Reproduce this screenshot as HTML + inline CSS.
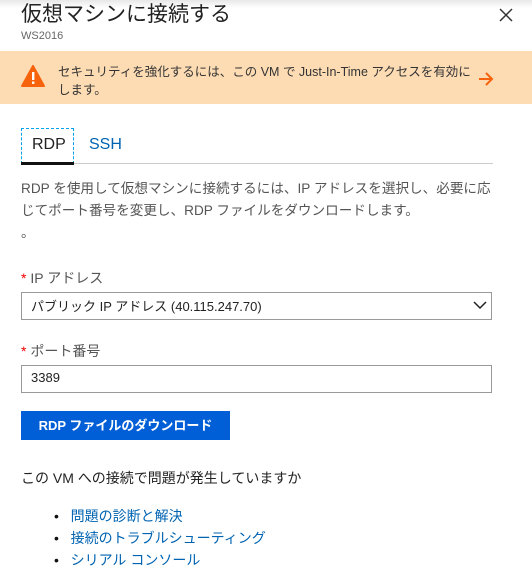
<html><head><style>
body{margin:0;width:532px;height:574px;overflow:hidden;background:#fff;font-family:"Liberation Sans","Noto Sans CJK JP",sans-serif;color:#333;position:relative}
.a{position:absolute;white-space:nowrap}
</style></head><body>
<div style="position:absolute;left:0;top:0;width:532px;height:8px;background:linear-gradient(#e8e8e8,#fff)"></div>
<div class="a" style="left:21px;top:-2px;font-size:21px;color:#222">仮想マシンに接続する</div>
<svg class="a" style="left:499px;top:8px" width="14" height="14"><path d="M1 1L13 13M13 1L1 13" stroke="#333" stroke-width="1.5"/></svg>
<div class="a" style="left:21px;top:30px;font-size:11px;color:#666">WS2016</div>
<div class="a" style="left:0;top:51px;width:532px;height:53px;background:#fddcb4"></div>
<svg class="a" style="left:21px;top:65px" width="24" height="22"><path d="M12 1L23 21H1Z" fill="#f7630c" stroke="#f7630c" stroke-linejoin="round" stroke-width="2"/><rect x="11" y="7" width="2.4" height="8" fill="#fff"/><rect x="11" y="16.5" width="2.4" height="2.4" fill="#fff"/></svg>
<div class="a" style="left:58px;top:63px;font-size:12.5px;line-height:18px;color:#333">セキュリティを強化するには、この VM で Just-In-Time アクセスを有効に<br>します。</div>
<svg class="a" style="left:478px;top:72px" width="16" height="14"><path d="M1 7H14M8 1L14 7L8 13" stroke="#f7630c" stroke-width="2" fill="none"/></svg>
<div class="a" style="left:21px;top:128px;width:51px;height:34px;border:1px dashed #00a2e8"></div>
<div class="a" style="left:21px;top:162px;width:53px;height:3px;background:#111"></div>
<div class="a" style="left:74px;top:163px;width:419px;height:1px;background:#ccc"></div>
<div class="a" style="left:32px;top:136px;font-size:16px;color:#222">RDP</div>
<div class="a" style="left:89px;top:136px;font-size:16px;color:#0063b1">SSH</div>
<div class="a" style="left:21px;top:178px;font-size:13.6px;line-height:22px;color:#555">RDP を使用して仮想マシンに接続するには、IP アドレスを選択し、必要に応<br>じてポート番号を変更し、RDP ファイルをダウンロードします。<br>。</div>
<div class="a" style="left:21px;top:268px;font-size:14px;color:#555"><span style="color:#e00">*</span> IP アドレス</div>
<div class="a" style="left:21px;top:292px;width:469px;height:26px;border:1px solid #999"></div>
<div class="a" style="left:31px;top:296px;font-size:13px;color:#222">パブリック IP アドレス (40.115.247.70)</div>
<svg class="a" style="left:473px;top:300px" width="14" height="10"><path d="M1 2L7 8L13 2" stroke="#222" stroke-width="1.5" fill="none"/></svg>
<div class="a" style="left:21px;top:341px;font-size:14px;color:#555"><span style="color:#e00">*</span> ポート番号</div>
<div class="a" style="left:21px;top:365px;width:469px;height:26px;border:1px solid #999"></div>
<div class="a" style="left:31px;top:370px;font-size:13px;color:#222">3389</div>
<div class="a" style="left:21px;top:411px;width:209px;height:29px;background:#005ed6;color:#fff;font-size:13px;font-weight:bold;text-align:center;line-height:29px">RDP ファイルのダウンロード</div>
<div class="a" style="left:21px;top:468px;font-size:14px;color:#222">この VM への接続で問題が発生していますか</div>
<div class="a" style="left:54px;top:505px;font-size:14px;line-height:22px;color:#0063b1"><span style="color:#111">•</span>&nbsp;&nbsp; 問題の診断と解決<br><span style="color:#111">•</span>&nbsp;&nbsp; 接続のトラブルシューティング<br><span style="color:#111">•</span>&nbsp;&nbsp; シリアル コンソール</div>
</body></html>
